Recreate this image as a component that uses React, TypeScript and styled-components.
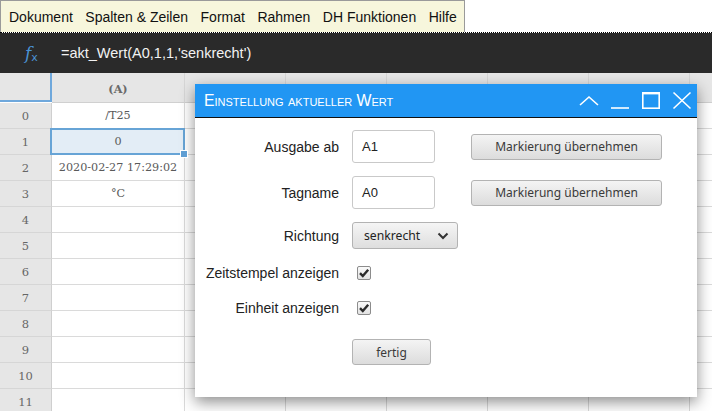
import React from 'react';
import styled, { createGlobalStyle } from 'styled-components';

const GlobalStyle = createGlobalStyle`
  html, body {
    margin: 0;
    padding: 0;
    background: #fff;
    overflow: hidden;
  }
  body {
    font-family: "Liberation Sans", Arial, sans-serif;
  }
`;

const Page = styled.div`
  position: relative;
  width: 712px;
  height: 411px;
  overflow: hidden;
  display: flex;
  flex-direction: column;

  & > * {
    flex-shrink: 0;
  }
`;

const MenuBar = styled.nav`
  align-self: flex-start;
  display: flex;
  align-items: center;
  gap: 12.5px;
  height: 32px;
  padding: 0 7px 0 8px;
  box-sizing: border-box;
  background: #f7f6dc;
  border: 1px solid #9a9a9a;
  border-bottom: none;
  font-size: 14px;
  color: #111;
`;

const MenuItem = styled.span`
  white-space: nowrap;
`;

const FormulaBar = styled.div`
  display: flex;
  align-items: center;
  height: 41px;
  box-sizing: border-box;
  background: #2a2a2a;
  background-clip: padding-box;
  border-top: 1px dotted #000;
  color: #f2f2f2;
  font-size: 14.5px;
`;

const FxIcon = styled.span`
  width: 61px;
  padding-left: 25px;
  box-sizing: border-box;
  color: #4a93d4;
  font-family: "DejaVu Serif", serif;
  font-style: italic;
  font-size: 17px;

  sub {
    font-size: 11px;
    font-style: normal;
    font-family: "DejaVu Sans", sans-serif;
    vertical-align: -2px;
  }
`;

const Sheet = styled.div`
  display: grid;
  grid-template-columns: 52px 133px repeat(6, 101px);
  grid-template-rows: 30px;
  grid-auto-rows: 26px;
  font-family: "DejaVu Serif", serif;
  font-size: 11.2px;
  color: #5a5a5a;
`;

const Cell = styled.div<{ $head?: boolean; $selected?: boolean }>`
  position: relative;
  display: flex;
  align-items: center;
  justify-content: center;
  box-sizing: border-box;
  border-right: 1px solid #dadada;
  border-bottom: 1px solid #dadada;
  background: ${(p) => (p.$selected ? '#e3edf6' : p.$head ? '#e6e6e6' : '#fff')};
  white-space: nowrap;

  ${(p) =>
    p.$selected &&
    `
    &::after {
      content: '';
      position: absolute;
      inset: -1px -1px -1px -2px;
      border: 2px solid #67a4d6;
    }
  `}
`;

const ColHead = styled(Cell)`
  padding-top: 2px;
  font-weight: bold;
  color: #6a6a6a;
  border-right-color: #d6d6d6;
  border-bottom-color: #d0d0d0;
`;

const Corner = styled.div`
  background: #e6e6e6;
  border-right: 2px solid #6fa8dc;
  border-bottom: 2px solid #6fa8dc;
  margin-bottom: 1px;
`;

const RowHead = styled(Cell)`
  background: #e6e6e6;
  border-right: 1px solid #cfcfcf;
  border-bottom-color: #d6d6d6;
  color: #666;
  font-size: 11.5px;
`;

const FillHandle = styled.span`
  position: absolute;
  right: -4px;
  bottom: -4px;
  width: 6px;
  height: 6px;
  background: #5f9ed3;
  border: 1px solid #fff;
  z-index: 2;
`;

const Dialog = styled.section`
  position: absolute;
  left: 195px;
  top: 84px;
  width: 502px;
  height: 313px;
  background: #fff;
  box-shadow: 0 5px 14px rgba(0, 0, 0, 0.45);
  display: flex;
  flex-direction: column;
`;

const TitleBar = styled.header`
  display: flex;
  align-items: center;
  height: 34px;
  box-sizing: border-box;
  padding: 0 5px 0 9px;
  background: #2196f3;
  border-bottom: 1px solid #111;
  color: #fff;
`;

const Title = styled.h2`
  flex: 1;
  margin: 0;
  font-weight: normal;
  font-size: 15.8px;
  font-variant: small-caps;
`;

const TitleIcons = styled.div`
  display: flex;
  gap: 11px;
`;

const Form = styled.div`
  display: flex;
  flex-direction: column;
  padding-top: 12px;
`;

const FormRow = styled.div<{ $h: number; $mt?: number }>`
  display: flex;
  align-items: center;
  height: ${(p) => p.$h}px;
  margin-top: ${(p) => p.$mt ?? 0}px;
`;

const Label = styled.label`
  width: 144px;
  margin-right: 13px;
  text-align: right;
  font-size: 14px;
  color: #222;
  white-space: nowrap;
`;

const TextInput = styled.div`
  width: 83px;
  height: 33px;
  box-sizing: border-box;
  display: flex;
  align-items: center;
  padding-left: 9px;
  border: 1px solid #c9c9c9;
  border-radius: 3px;
  font-size: 13px;
  color: #222;
`;

const GrayButton = styled.button<{ $w: number }>`
  width: ${(p) => p.$w}px;
  height: 26px;
  box-sizing: border-box;
  padding: 0;
  border: 1px solid #b3b3b3;
  border-radius: 3px;
  background: linear-gradient(#f4f4f4, #dcdcdc);
  font-family: "Noto Sans", "Open Sans", sans-serif;
  font-size: 12px;
  color: #3a3a3a;
`;

const SideButton = styled(GrayButton)`
  margin-left: 36px;
`;

const Select = styled.div`
  width: 106px;
  height: 27px;
  box-sizing: border-box;
  display: flex;
  align-items: center;
  justify-content: space-between;
  padding: 0 8px 0 11px;
  border: 1px solid #b3b3b3;
  border-radius: 3px;
  background: linear-gradient(#f5f5f5, #dedede);
  font-family: "Noto Sans", "Open Sans", sans-serif;
  font-size: 12.2px;
  color: #222;
`;

const CheckBox = styled.span`
  width: 14px;
  height: 14px;
  margin-left: 5px;
  box-sizing: border-box;
  display: flex;
  align-items: center;
  justify-content: center;
  border: 1px solid #8c8c8c;
  border-radius: 2px;
  background: linear-gradient(#fafafa, #e2e2e2);
`;

const Check = () => (
  <CheckBox>
    <svg width="12" height="12" viewBox="0 0 12 12">
      <path d="M2 6.2 L4.8 9 L10.2 2.8" fill="none" stroke="#2b2b2b" strokeWidth="2.4" />
    </svg>
  </CheckBox>
);

const WinIcons = () => (
  <TitleIcons>
    <svg width="20" height="20" viewBox="0 0 20 20">
      <path d="M1 14 L10 6 L19 14" fill="none" stroke="#fff" strokeWidth="1.6" />
    </svg>
    <svg width="20" height="20" viewBox="0 0 20 20">
      <path d="M1 17 H19" fill="none" stroke="#fff" strokeWidth="1.6" />
    </svg>
    <svg width="20" height="20" viewBox="0 0 20 20">
      <rect x="1.8" y="1.8" width="16.4" height="15.4" fill="none" stroke="#fff" strokeWidth="1.6" />
      <path d="M1 2.2 H19" stroke="#fff" strokeWidth="2.4" />
    </svg>
    <svg width="20" height="20" viewBox="0 0 20 20">
      <path d="M1.5 1.5 L18.5 17.5 M18.5 1.5 L1.5 17.5" fill="none" stroke="#fff" strokeWidth="1.6" />
    </svg>
  </TitleIcons>
);

const menu = ['Dokument', 'Spalten & Zeilen', 'Format', 'Rahmen', 'DH Funktionen', 'Hilfe'];
// last column runs off the right edge, its label is not visible
const columns = ['(A)', '(B)', '(C)', '(D)', '(E)', '(F)', ''];
const values: Record<number, string> = {
  0: '/T25',
  1: '0',
  2: '2020-02-27 17:29:02',
  3: '°C',
};

export default function App() {
  const rows = Array.from({ length: 12 }, (_, i) => i);

  return (
    <Page>
      <GlobalStyle />
      <MenuBar>
        {menu.map((m) => (
          <MenuItem key={m}>{m}</MenuItem>
        ))}
      </MenuBar>

      <FormulaBar>
        <FxIcon>
          f<sub>x</sub>
        </FxIcon>
        <span>=akt_Wert(A0,1,1,'senkrecht')</span>
      </FormulaBar>

      <Sheet>
        <Corner />
        {columns.map((c, i) => (
          <ColHead key={i} $head>
            {c}
          </ColHead>
        ))}
        {rows.map((r) => (
          <React.Fragment key={r}>
            <RowHead>{r}</RowHead>
            <Cell $selected={r === 1}>
              {values[r] ?? ''}
              {r === 1 && <FillHandle />}
            </Cell>
            {columns.slice(1).map((_, i) => (
              <Cell key={i} />
            ))}
          </React.Fragment>
        ))}
      </Sheet>

      <Dialog>
        <TitleBar>
          <Title>Einstellung aktueller Wert</Title>
          <WinIcons />
        </TitleBar>
        <Form>
          <FormRow $h={33}>
            <Label>Ausgabe ab</Label>
            <TextInput>A1</TextInput>
            <SideButton $w={191}>Markierung übernehmen</SideButton>
          </FormRow>
          <FormRow $h={33} $mt={13}>
            <Label>Tagname</Label>
            <TextInput>A0</TextInput>
            <SideButton $w={191}>Markierung übernehmen</SideButton>
          </FormRow>
          <FormRow $h={27} $mt={13}>
            <Label>Richtung</Label>
            <Select>
              senkrecht
              <svg width="12" height="8" viewBox="0 0 12 8">
                <path d="M1.5 1.5 L6 6 L10.5 1.5" fill="none" stroke="#333" strokeWidth="2" />
              </svg>
            </Select>
          </FormRow>
          <FormRow $h={28} $mt={10}>
            <Label>Zeitstempel anzeigen</Label>
            <Check />
          </FormRow>
          <FormRow $h={28} $mt={7}>
            <Label>Einheit anzeigen</Label>
            <Check />
          </FormRow>
          <FormRow $h={26} $mt={17}>
            <Label />
            <GrayButton $w={79}>fertig</GrayButton>
          </FormRow>
        </Form>
      </Dialog>
    </Page>
  );
}
